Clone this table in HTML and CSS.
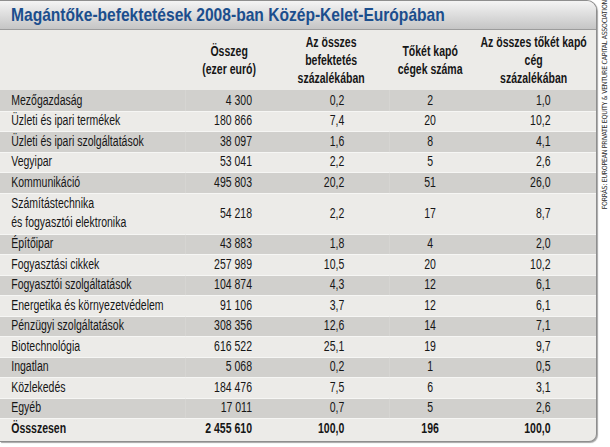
FILE: index.html
```html
<!DOCTYPE html>
<html lang="hu">
<head>
<meta charset="utf-8">
<title>Magántőke-befektetések 2008-ban Közép-Kelet-Európában</title>
<link rel="stylesheet" href="styles.css">
</head>
<body>
<div class="page">
  <div class="panel">
    <div class="title-bar"><h1>Magántőke-befektetések 2008-ban Közép-Kelet-Európában</h1></div>
    <table class="data">
      <colgroup>
        <col class="c-label"><col class="c-sum"><col class="c-pct"><col class="c-cnt"><col class="c-cpct">
      </colgroup>
      <thead>
        <tr>
          <th></th>
          <th>Összeg<br>(ezer euró)</th>
          <th>Az összes<br>befektetés<br>százalékában</th>
          <th>Tőkét kapó<br>cégek száma</th>
          <th>Az összes tőkét kapó<br>cég<br>százalékában</th>
        </tr>
      </thead>
      <tbody>
        <tr class="dark"><td>Mezőgazdaság</td><td>4 300</td><td>0,2</td><td>2</td><td>1,0</td></tr>
        <tr><td>Üzleti és ipari termékek</td><td>180 866</td><td>7,4</td><td>20</td><td>10,2</td></tr>
        <tr class="dark"><td>Üzleti és ipari szolgáltatások</td><td>38 097</td><td>1,6</td><td>8</td><td>4,1</td></tr>
        <tr><td>Vegyipar</td><td>53 041</td><td>2,2</td><td>5</td><td>2,6</td></tr>
        <tr class="dark"><td>Kommunikáció</td><td>495 803</td><td>20,2</td><td>51</td><td>26,0</td></tr>
        <tr class="double"><td>Számítástechnika<br>és fogyasztói elektronika</td><td>54 218</td><td>2,2</td><td>17</td><td>8,7</td></tr>
        <tr class="dark"><td>Építőipar</td><td>43 883</td><td>1,8</td><td>4</td><td>2,0</td></tr>
        <tr><td>Fogyasztási cikkek</td><td>257 989</td><td>10,5</td><td>20</td><td>10,2</td></tr>
        <tr class="dark"><td>Fogyasztói szolgáltatások</td><td>104 874</td><td>4,3</td><td>12</td><td>6,1</td></tr>
        <tr><td>Energetika és környezetvédelem</td><td>91 106</td><td>3,7</td><td>12</td><td>6,1</td></tr>
        <tr class="dark"><td>Pénzügyi szolgáltatások</td><td>308 356</td><td>12,6</td><td>14</td><td>7,1</td></tr>
        <tr><td>Biotechnológia</td><td>616 522</td><td>25,1</td><td>19</td><td>9,7</td></tr>
        <tr class="dark"><td>Ingatlan</td><td>5 068</td><td>0,2</td><td>1</td><td>0,5</td></tr>
        <tr><td>Közlekedés</td><td>184 476</td><td>7,5</td><td>6</td><td>3,1</td></tr>
        <tr class="dark"><td>Egyéb</td><td>17 011</td><td>0,7</td><td>5</td><td>2,6</td></tr>
        <tr class="total"><td>Össszesen</td><td>2 455 610</td><td>100,0</td><td>196</td><td>100,0</td></tr>
      </tbody>
    </table>
  </div>
  <div class="source"><span>FORRÁS: EUROPEAN PRIVATE EQUITY &amp; VENTURE CAPITAL ASSOCIATION</span></div>
</div>
</body>
</html>
```

FILE: styles.css
```css
html, body {
  margin: 0;
  padding: 0;
  background: #ffffff;
}

body {
  font-family: "Liberation Sans", Arial, sans-serif;
  color: #161616;
}

.page {
  display: flex;
  align-items: flex-start;
  width: 610px;
  height: 447px;
}

.panel {
  flex: 0 0 auto;
  width: 597px;
  height: 442px;
  box-sizing: border-box;
  background: #ecebe8;
  border: 1px solid #8e8e8e;
  border-left: none;
  border-radius: 0 10px 8px 0;
  box-shadow: 1px 1px 1px rgba(0, 0, 0, 0.35);
  overflow: hidden;
}

.title-bar {
  height: 29px;
  box-sizing: border-box;
  background: linear-gradient(#f4f4f4, #c5c5c5);
  border-bottom: 1px solid #9c9c9c;
  padding-left: 11px;
}

/* the reference face is a condensed grotesque; Liberation Sans is narrowed to match */
.title-bar h1 {
  margin: 0;
  font-size: 19px;
  line-height: 28px;
  font-weight: bold;
  color: #1b4e8d;
  white-space: nowrap;
  transform: scaleX(0.82);
  transform-origin: left center;
}

.data {
  width: 795px;
  border-collapse: collapse;
  table-layout: fixed;
  font-size: 14px;
  transform: scaleX(0.75);
  transform-origin: left top;
}

.c-label { width: 247px; }
.c-sum { width: 117px; }
.c-pct { width: 155px; }
.c-cnt { width: 109px; }
.c-cpct { width: auto; }

.data thead th {
  height: 60px;
  padding: 0;
  font-weight: bold;
  font-size: 14px;
  line-height: 18px;
  text-align: center;
  vertical-align: middle;
  white-space: nowrap;
}

.data td {
  height: 20.5px;
  padding: 0;
  line-height: 19px;
  white-space: nowrap;
  vertical-align: middle;
  box-shadow: inset 0 1px 0 #f6f6f4;
}

.data tbody tr:first-child td {
  box-shadow: none;
}

.data tr.dark td {
  background: #d1d0cd;
}

.data tr.double td {
  height: 41px;
}

.data td:nth-child(1) {
  padding-left: 15px;
  text-align: left;
}

.data td:nth-child(2) {
  text-align: right;
  padding-right: 28px;
}

.data td:nth-child(3) {
  text-align: right;
  padding-right: 60px;
}

.data td:nth-child(4) {
  text-align: center;
}

.data td:nth-child(5) {
  text-align: right;
  padding-right: 61px;
}

.data tr.total td {
  font-weight: bold;
}

.source {
  flex: 0 0 auto;
  align-self: flex-start;
  margin-left: 4px;
  writing-mode: vertical-rl;
  transform: rotate(180deg);
  font-family: "DejaVu Sans Condensed", "DejaVu Sans", sans-serif;
  font-size: 7px;
  line-height: 8px;
  letter-spacing: -0.3px;
  color: #2a2a2a;
  white-space: nowrap;
}
```
